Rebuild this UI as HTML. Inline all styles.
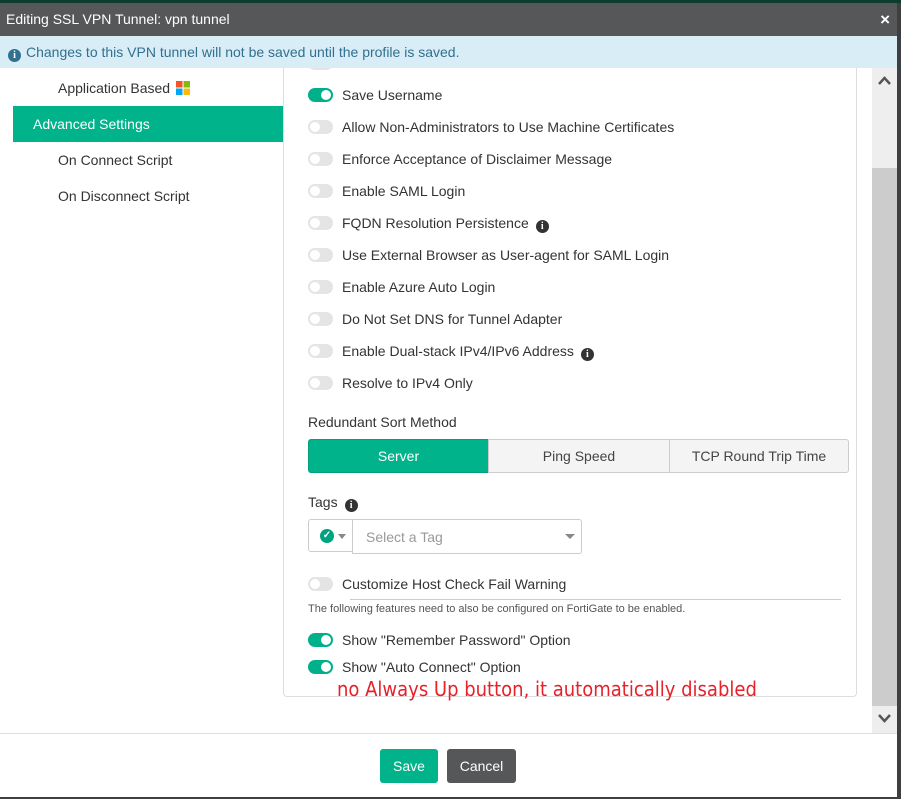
<!DOCTYPE html>
<html><head><style>
*{box-sizing:border-box;margin:0;padding:0}
body{width:901px;height:799px;background:#3d3f41;font-family:"Liberation Sans",sans-serif;position:relative;overflow:hidden;font-size:14px;color:#333}
.a{position:absolute}
.dlg{left:0;top:3px;width:897px;height:794px;background:#fff}
.tg{position:absolute;left:308px;width:25px;height:14px;border-radius:7px;background:#e4e4e4}
.tg::after{content:"";position:absolute;top:2px;left:2px;width:10px;height:10px;border-radius:50%;background:#fff}
.tg.on{background:#00b08a}
.tg.on::after{left:13px}
.lb{position:absolute;left:342px;font-size:14px;color:#333;white-space:nowrap}
.i{display:inline-block;width:13px;height:13px;border-radius:50%;background:#333;color:#fff;font:bold 10px/13px "Liberation Serif",serif;text-align:center;vertical-align:-1px;margin-left:7px}
.seg{position:absolute;top:439px;height:34px;border:1px solid #ccc;background:#f4f4f4;text-align:center;line-height:32px;font-size:14px;color:#444}
</style></head><body>
<div class="a" style="left:0;top:0;width:901px;height:3px;background:#0d3b2e"></div>
<div class="a dlg"></div>
<div class="a" style="left:0;top:3px;width:897px;height:33px;background:#555759;color:#fff;font-size:14px;line-height:33px;padding-left:6px">Editing SSL VPN Tunnel: vpn tunnel<span style="position:absolute;right:7px;top:0;font-weight:bold;font-size:17px">×</span></div>
<div class="a" style="left:58px;top:80px;font-size:14px">Application Based <svg width="14" height="14" style="vertical-align:-2px;margin-left:2px"><rect width="6.5" height="6.5" fill="#f35325"/><rect x="7.5" width="6.5" height="6.5" fill="#81bc06"/><rect y="7.5" width="6.5" height="6.5" fill="#05a6f0"/><rect x="7.5" y="7.5" width="6.5" height="6.5" fill="#ffba08"/></svg></div>
<div class="a" style="left:13px;top:106px;width:270px;height:36px;background:#00b38a;color:#fff;line-height:36px;padding-left:20px">Advanced Settings</div>
<div class="a" style="left:58px;top:152px">On Connect Script</div>
<div class="a" style="left:58px;top:188px">On Disconnect Script</div>
<div class="a" style="left:283px;top:60px;width:574px;height:637px;border:1px solid #ddd;border-top:none;border-radius:0 0 4px 4px"></div>
<div class="tg" style="top:56px"></div>
<div class="a" style="left:0;top:36px;width:897px;height:32px;background:#d9edf7;color:#31708f;font-size:14px;line-height:32px;padding-left:8px"><span class="i" style="background:#31708f;margin:0 5px 0 0">i</span>Changes to this VPN tunnel will not be saved until the profile is saved.</div>
<div class="tg on" style="top:88px"></div><div class="lb" style="top:87px">Save Username</div>
<div class="tg" style="top:120px"></div><div class="lb" style="top:119px">Allow Non-Administrators to Use Machine Certificates</div>
<div class="tg" style="top:152px"></div><div class="lb" style="top:151px">Enforce Acceptance of Disclaimer Message</div>
<div class="tg" style="top:184px"></div><div class="lb" style="top:183px">Enable SAML Login</div>
<div class="tg" style="top:216px"></div><div class="lb" style="top:215px">FQDN Resolution Persistence<span class="i">i</span></div>
<div class="tg" style="top:248px"></div><div class="lb" style="top:247px">Use External Browser as User-agent for SAML Login</div>
<div class="tg" style="top:280px"></div><div class="lb" style="top:279px">Enable Azure Auto Login</div>
<div class="tg" style="top:312px"></div><div class="lb" style="top:311px">Do Not Set DNS for Tunnel Adapter</div>
<div class="tg" style="top:344px"></div><div class="lb" style="top:343px">Enable Dual-stack IPv4/IPv6 Address<span class="i">i</span></div>
<div class="tg" style="top:376px"></div><div class="lb" style="top:375px">Resolve to IPv4 Only</div>
<div class="a" style="left:308px;top:414px">Redundant Sort Method</div>
<div class="seg" style="left:308px;width:181px;background:#00b38a;border-color:#00a07c;color:#fff;border-radius:3px 0 0 3px">Server</div>
<div class="seg" style="left:488px;width:182px">Ping Speed</div>
<div class="seg" style="left:669px;width:180px;border-radius:0 3px 3px 0">TCP Round Trip Time</div>
<div class="a" style="left:308px;top:494px">Tags<span class="i" style="margin-left:7px">i</span></div>
<div class="a" style="left:308px;top:519px;width:45px;height:33px;border:1px solid #ccc;border-radius:3px 0 0 3px"><span class="a" style="left:11px;top:9px;width:14px;height:14px;border-radius:50%;background:#00a37f;color:#fff;font-size:10px;line-height:14px;text-align:center;font-weight:bold">✓</span><span class="a" style="left:29px;top:14px;border:4px solid transparent;border-top:5px solid #888"></span></div>
<div class="a" style="left:352px;top:519px;width:230px;height:35px;border:1px solid #ccc;border-radius:0 3px 3px 0;color:#999;line-height:35px;padding-left:13px">Select a Tag<span class="a" style="right:6px;top:14px;border:5px solid transparent;border-top:5px solid #888"></span></div>
<div class="tg" style="top:577px"></div><div class="lb" style="top:576px">Customize Host Check Fail Warning</div>
<div class="a" style="left:350px;top:599px;width:491px;height:1px;background:#ccc"></div>
<div class="a" style="left:308px;top:603px;font-size:11px;color:#555">The following features need to also be configured on FortiGate to be enabled.</div>
<div class="tg on" style="top:633px"></div><div class="lb" style="top:632px">Show "Remember Password" Option</div>
<div class="tg on" style="top:660px"></div><div class="lb" style="top:659px">Show "Auto Connect" Option</div>
<div class="a" style="left:337px;top:677px;font-size:20px;color:#e8202a;font-family:'DejaVu Sans Condensed','DejaVu Sans',sans-serif;white-space:nowrap">no Always Up button, it automatically disabled</div>
<div class="a" style="left:872px;top:68px;width:25px;height:665px;background:#eee"></div>
<div class="a" style="left:872px;top:168px;width:25px;height:538px;background:#ccc"></div>
<svg class="a" style="left:877px;top:73px" width="15" height="15"><path d="M2 11 L7.5 5 L13 11" stroke="#555" stroke-width="2.5" fill="none"/></svg>
<svg class="a" style="left:877px;top:711px" width="15" height="15"><path d="M2 4 L7.5 10 L13 4" stroke="#555" stroke-width="2.5" fill="none"/></svg>
<div class="a" style="left:0;top:733px;width:897px;height:1px;background:#ddd"></div>
<div class="a" style="left:380px;top:749px;width:58px;height:34px;background:#00b38a;border-radius:3px;color:#fff;text-align:center;line-height:34px">Save</div>
<div class="a" style="left:447px;top:749px;width:69px;height:34px;background:#555759;border-radius:3px;color:#fff;text-align:center;line-height:34px">Cancel</div>
</body></html>
